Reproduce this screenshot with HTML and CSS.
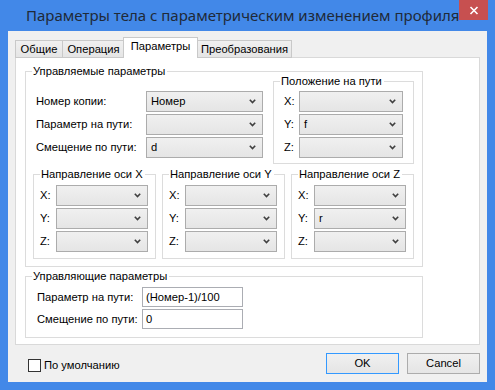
FILE: index.html
```html
<!DOCTYPE html>
<html lang="ru">
<head>
<meta charset="utf-8">
<title>Параметры тела</title>
<link rel="stylesheet" href="styles.css">
</head>
<body>
<div class="window">
  <div class="titlebar">
    <div class="title">Параметры тела с параметрическим изменением профиля</div>
    <div class="close">
      <svg width="10" height="9" viewBox="0 0 10 9"><path d="M1.5 1 L8.5 8 M8.5 1 L1.5 8" stroke="#fff" stroke-width="1.6" fill="none"/></svg>
    </div>
  </div>
  <div class="client">
    <div class="tabs">
      <div class="tab t1">Общие</div>
      <div class="tab t2">Операция</div>
      <div class="tab t3 active">Параметры</div>
      <div class="tab t4">Преобразования</div>
    </div>
    <div class="panel">
      <div class="group g-main">
        <span class="legend">Управляемые параметры</span>
        <div class="top-row">
          <div class="form-rows">
            <div class="row"><span class="lbl lbl-wide">Номер копии:</span><div class="combo combo-wide">Номер<i class="arr"></i></div></div>
            <div class="row"><span class="lbl lbl-wide">Параметр на пути:</span><div class="combo combo-wide"><i class="arr"></i></div></div>
            <div class="row"><span class="lbl lbl-wide">Смещение по пути:</span><div class="combo combo-wide">d<i class="arr"></i></div></div>
          </div>
          <div class="group g-pos">
            <span class="legend">Положение на пути</span>
            <div class="row"><span class="lbl lbl-axis">X:</span><div class="combo combo-pos"><i class="arr"></i></div></div>
            <div class="row"><span class="lbl lbl-axis">Y:</span><div class="combo combo-pos">f<i class="arr"></i></div></div>
            <div class="row"><span class="lbl lbl-axis">Z:</span><div class="combo combo-pos"><i class="arr"></i></div></div>
          </div>
        </div>
        <div class="axes">
          <div class="group g-axis">
            <span class="legend">Направление оси X</span>
            <div class="row"><span class="lbl lbl-ax">X:</span><div class="combo combo-ax"><i class="arr"></i></div></div>
            <div class="row"><span class="lbl lbl-ax">Y:</span><div class="combo combo-ax"><i class="arr"></i></div></div>
            <div class="row"><span class="lbl lbl-ax">Z:</span><div class="combo combo-ax"><i class="arr"></i></div></div>
          </div>
          <div class="group g-axis">
            <span class="legend">Направление оси Y</span>
            <div class="row"><span class="lbl lbl-ax">X:</span><div class="combo combo-ax"><i class="arr"></i></div></div>
            <div class="row"><span class="lbl lbl-ax">Y:</span><div class="combo combo-ax"><i class="arr"></i></div></div>
            <div class="row"><span class="lbl lbl-ax">Z:</span><div class="combo combo-ax"><i class="arr"></i></div></div>
          </div>
          <div class="group g-axis">
            <span class="legend">Направление оси Z</span>
            <div class="row"><span class="lbl lbl-ax">X:</span><div class="combo combo-ax"><i class="arr"></i></div></div>
            <div class="row"><span class="lbl lbl-ax">Y:</span><div class="combo combo-ax">r<i class="arr"></i></div></div>
            <div class="row"><span class="lbl lbl-ax">Z:</span><div class="combo combo-ax"><i class="arr"></i></div></div>
          </div>
        </div>
      </div>
      <div class="group g-ctrl">
        <span class="legend">Управляющие параметры</span>
        <div class="row row-in"><span class="lbl lbl-ctrl">Параметр на пути:</span><div class="input">(Номер-1)/100</div></div>
        <div class="row row-in"><span class="lbl lbl-ctrl">Смещение по пути:</span><div class="input">0</div></div>
      </div>
    </div>
    <div class="footer">
      <div class="check"><span class="box"></span><span>По умолчанию</span></div>
      <div class="buttons">
        <div class="btn btn-default">OK</div>
        <div class="btn">Cancel</div>
      </div>
    </div>
  </div>
</div>
</body>
</html>
```
FILE: styles.css
```css
* { box-sizing: border-box; }
html, body { margin: 0; padding: 0; }
body {
  width: 495px;
  height: 390px;
  overflow: hidden;
  background: #4288e8;
  font-family: "Liberation Sans", Arial, sans-serif;
  font-size: 11.2px;
  color: #000;
}
.window { width: 495px; height: 390px; display: flex; flex-direction: column; }
.titlebar { height: 31px; display: flex; align-items: flex-start; }
.title {
  padding-left: 26px;
  padding-top: 5px;
  font-family: "Noto Sans", "Open Sans", sans-serif;
  font-size: 15px;
  line-height: 20px;
  color: #1f2a38;
  white-space: nowrap;
}
.close {
  margin-left: auto;
  margin-right: 7px;
  width: 30px;
  height: 20px;
  background: #c75050;
  display: flex;
  align-items: center;
  justify-content: center;
}
.client {
  margin: 0 8px;
  height: 351px;
  background: #f0f0f0;
  padding: 0 7px;
  display: flex;
  flex-direction: column;
}
.tabs {
  height: 27px;
  display: flex;
  align-items: flex-end;
  margin-bottom: -1px;
  position: relative;
  z-index: 1;
}
.tab {
  height: 18px;
  border: 1px solid #c9c9c9;
  background: linear-gradient(#f0f0f0, #e5e5e5);
  display: flex;
  align-items: center;
  justify-content: center;
  line-height: 15px;
  padding-top: 1px;
  white-space: nowrap;
}
.t1 { width: 48px; }
.t2 { width: 63px; margin-left: -1px; }
.t3 { width: 75px; margin-left: -2px; }
.t4 { width: 95px; margin-left: -1px; }
.tab.active {
  height: 21px;
  background: #fff;
  border-bottom: none;
  padding-top: 0;
  padding-bottom: 3px;
  position: relative;
  z-index: 2;
}
.panel {
  height: 288px;
  background: #fff;
  border: 1px solid #d9d9d9;
  padding: 13px 0 0 9px;
}
.group {
  position: relative;
  border: 1px solid #dcdcdc;
}
.legend {
  position: absolute;
  top: -8px;
  left: 6px;
  padding: 0 2px 0 1px;
  background: #fff;
  line-height: 15px;
  white-space: nowrap;
}
.g-main {
  width: 398px;
  height: 196px;
  padding: 9px 8px 7px 7px;
}
.top-row { display: flex; justify-content: space-between; height: 83px; }
.form-rows { padding-top: 10px; padding-left: 3px; }
.row { display: flex; align-items: center; height: 21px; margin-bottom: 2px; }
.lbl { white-space: nowrap; line-height: 15px; }
.lbl-wide { width: 110px; }
.lbl-axis { width: 15px; }
.lbl-ax { width: 16px; }
.lbl-ctrl { width: 105px; }
.g-pos { width: 141px; height: 83px; padding: 9px 0 0 10px; }
.axes { display: flex; gap: 6px; margin-top: 10px; }
.g-axis { width: 123px; height: 85px; padding: 10px 0 0 6px; }
.combo {
  height: 21px;
  border: 1px solid #acacac;
  background: linear-gradient(#f0f0f0, #e5e5e5);
  position: relative;
  padding-left: 4px;
  line-height: 19px;
  white-space: nowrap;
}
.combo-wide { width: 117px; }
.combo-pos { width: 104px; }
.combo-ax { width: 92px; }
.arr {
  position: absolute;
  right: 6px;
  top: 7px;
  width: 7px;
  height: 5px;
  background: url("data:image/svg+xml,%3Csvg xmlns='http://www.w3.org/2000/svg' width='7' height='5' viewBox='0 0 7 5'%3E%3Cpath d='M0.8 0.8 L3.5 3.6 L6.2 0.8' stroke='%23404040' stroke-width='1.6' fill='none'/%3E%3C/svg%3E") no-repeat;
}
.g-ctrl {
  width: 398px;
  height: 62px;
  margin-top: 9px;
  padding: 10px 0 0 11px;
}
.row-in { height: 20px; }
.input {
  width: 101px;
  height: 20px;
  border: 1px solid #abadb3;
  background: #fff;
  padding-left: 3px;
  line-height: 18px;
  white-space: nowrap;
}
.footer {
  display: flex;
  align-items: flex-start;
  justify-content: space-between;
  padding-top: 8px;
}
.check {
  display: flex;
  align-items: center;
  gap: 3px;
  margin-left: 13px;
  margin-top: 5px;
  line-height: 15px;
}
.box {
  width: 13px;
  height: 13px;
  border: 1px solid #333;
  background: #fff;
}
.buttons { display: flex; gap: 8px; }
.btn {
  width: 73px;
  height: 21px;
  border: 1px solid #acacac;
  background: linear-gradient(#f0f0f0, #e5e5e5);
  display: flex;
  align-items: center;
  justify-content: center;
  line-height: 15px;
}
.btn-default { border-color: #3399ff; }
```
